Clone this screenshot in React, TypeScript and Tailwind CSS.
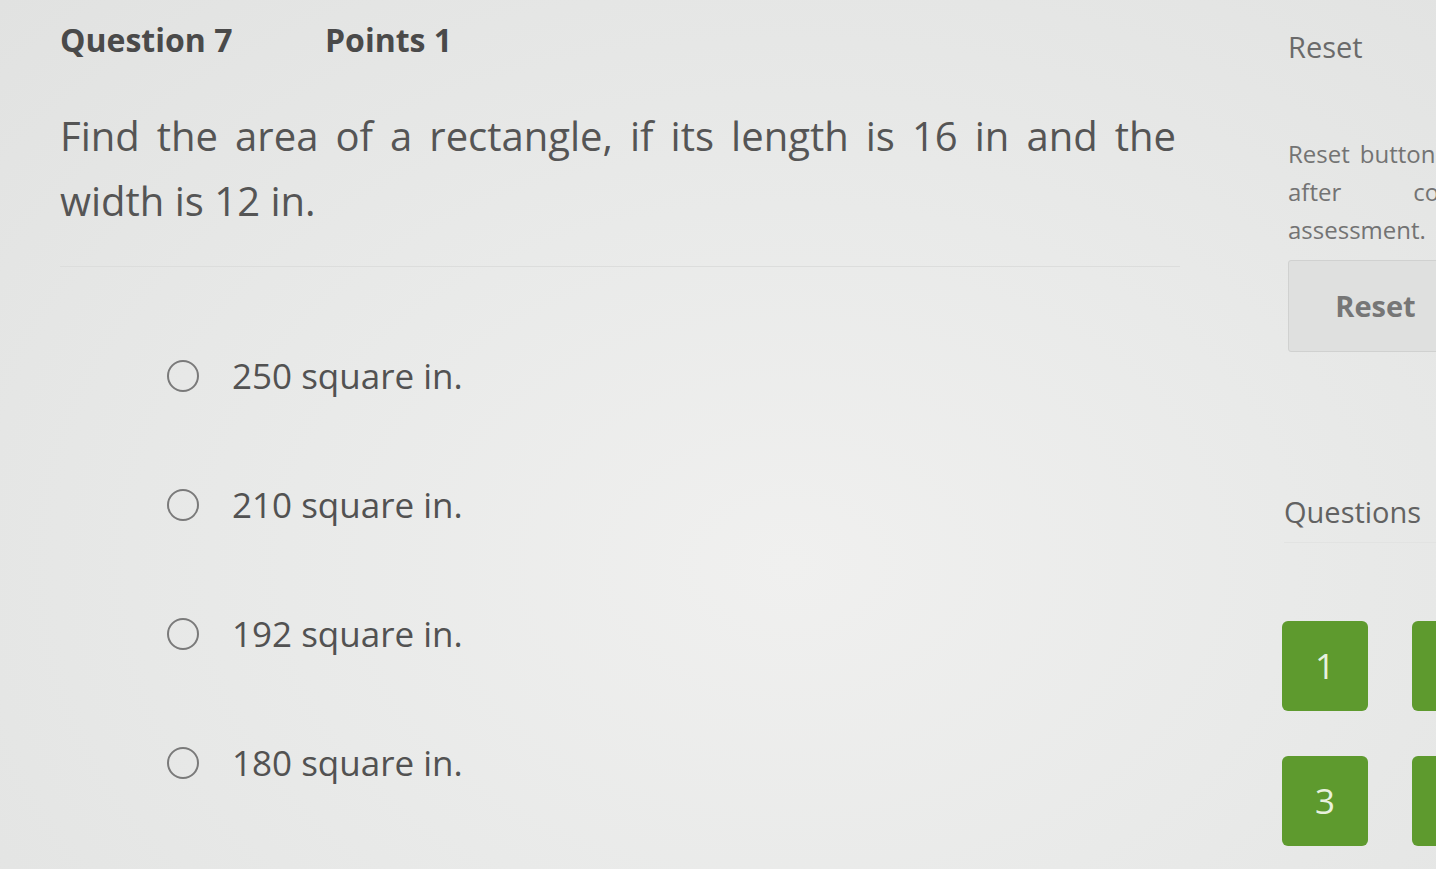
import React from 'react';

const options = ['250 square in.', '210 square in.', '192 square in.', '180 square in.'];
const navItems = [1, 2, 3, 4];

const App: React.FC = () => {
  return (
    <div
      className="w-[1436px] h-[869px] overflow-hidden flex bg-[#e4e5e4] bg-[radial-gradient(ellipse_at_55%_65%,#f0f0ef_0%,#e9eae9_45%,#e1e2e1_100%)] text-[#545454]"
      style={{ fontFamily: '"Open Sans", "Noto Sans", sans-serif' }}
    >
      {/* main question column */}
      <div className="w-[1180px] flex-none pl-[60px] pt-[20px]">
        <div className="flex items-center text-[32px] leading-[40px] font-bold text-[#4a4a4a]">
          <span className="w-[265px]">Question 7</span>
          <span>Points 1</span>
        </div>

        <div className="border-b border-[#dcdddc] pb-[33px] mt-[43px]">
          <p className="text-[40px] leading-[65px] text-justify w-[1116px] text-[#555]">
            Find the area of a rectangle, if its length is 16 in and the width is 12 in.
          </p>
        </div>

        <div className="mt-[44px] pl-[107px] flex flex-col">
          {options.map((opt) => (
            <label key={opt} className="h-[129px] flex items-center gap-[33px]">
              <span className="w-[32px] h-[32px] rounded-full border-2 border-[#7a7a7a] flex-none" />
              <span className="text-[35px] leading-none text-[#525252]">{opt}</span>
            </label>
          ))}
        </div>
      </div>

      {/* sidebar */}
      <div className="ml-[108px] w-[250px] flex-none pt-[27px]">
        <h2 className="text-[29px] leading-[40px] text-[#6a6a6a]">Reset</h2>
        <p className="mt-[68px] text-[24px] leading-[38px] text-justify text-[#737373]">
          Reset button is active after completing assessment.
        </p>
        <button className="mt-[11px] w-[175px] h-[92px] rounded-[3px] border border-[#d0d1d0] bg-[#dfe0df] text-[29px] font-bold text-[#767676]">
          Reset
        </button>

        <div className="mt-[140px] -ml-[4px] border-b border-[#e2e3e2] pb-[10px]">
          <h2 className="text-[29px] leading-[40px] text-[#626262]">Questions</h2>
        </div>

        <div className="mt-[78px] -ml-[6px] grid grid-cols-[86px_86px] gap-x-[44px] gap-y-[45px]">
          {navItems.map((n) => (
            <div
              key={n}
              className="h-[90px] rounded-[6px] bg-[#5e9a2e] flex items-center justify-center text-[35px] text-[#e8f1de]"
            >
              {n}
            </div>
          ))}
        </div>
      </div>
    </div>
  );
};

export default App;
